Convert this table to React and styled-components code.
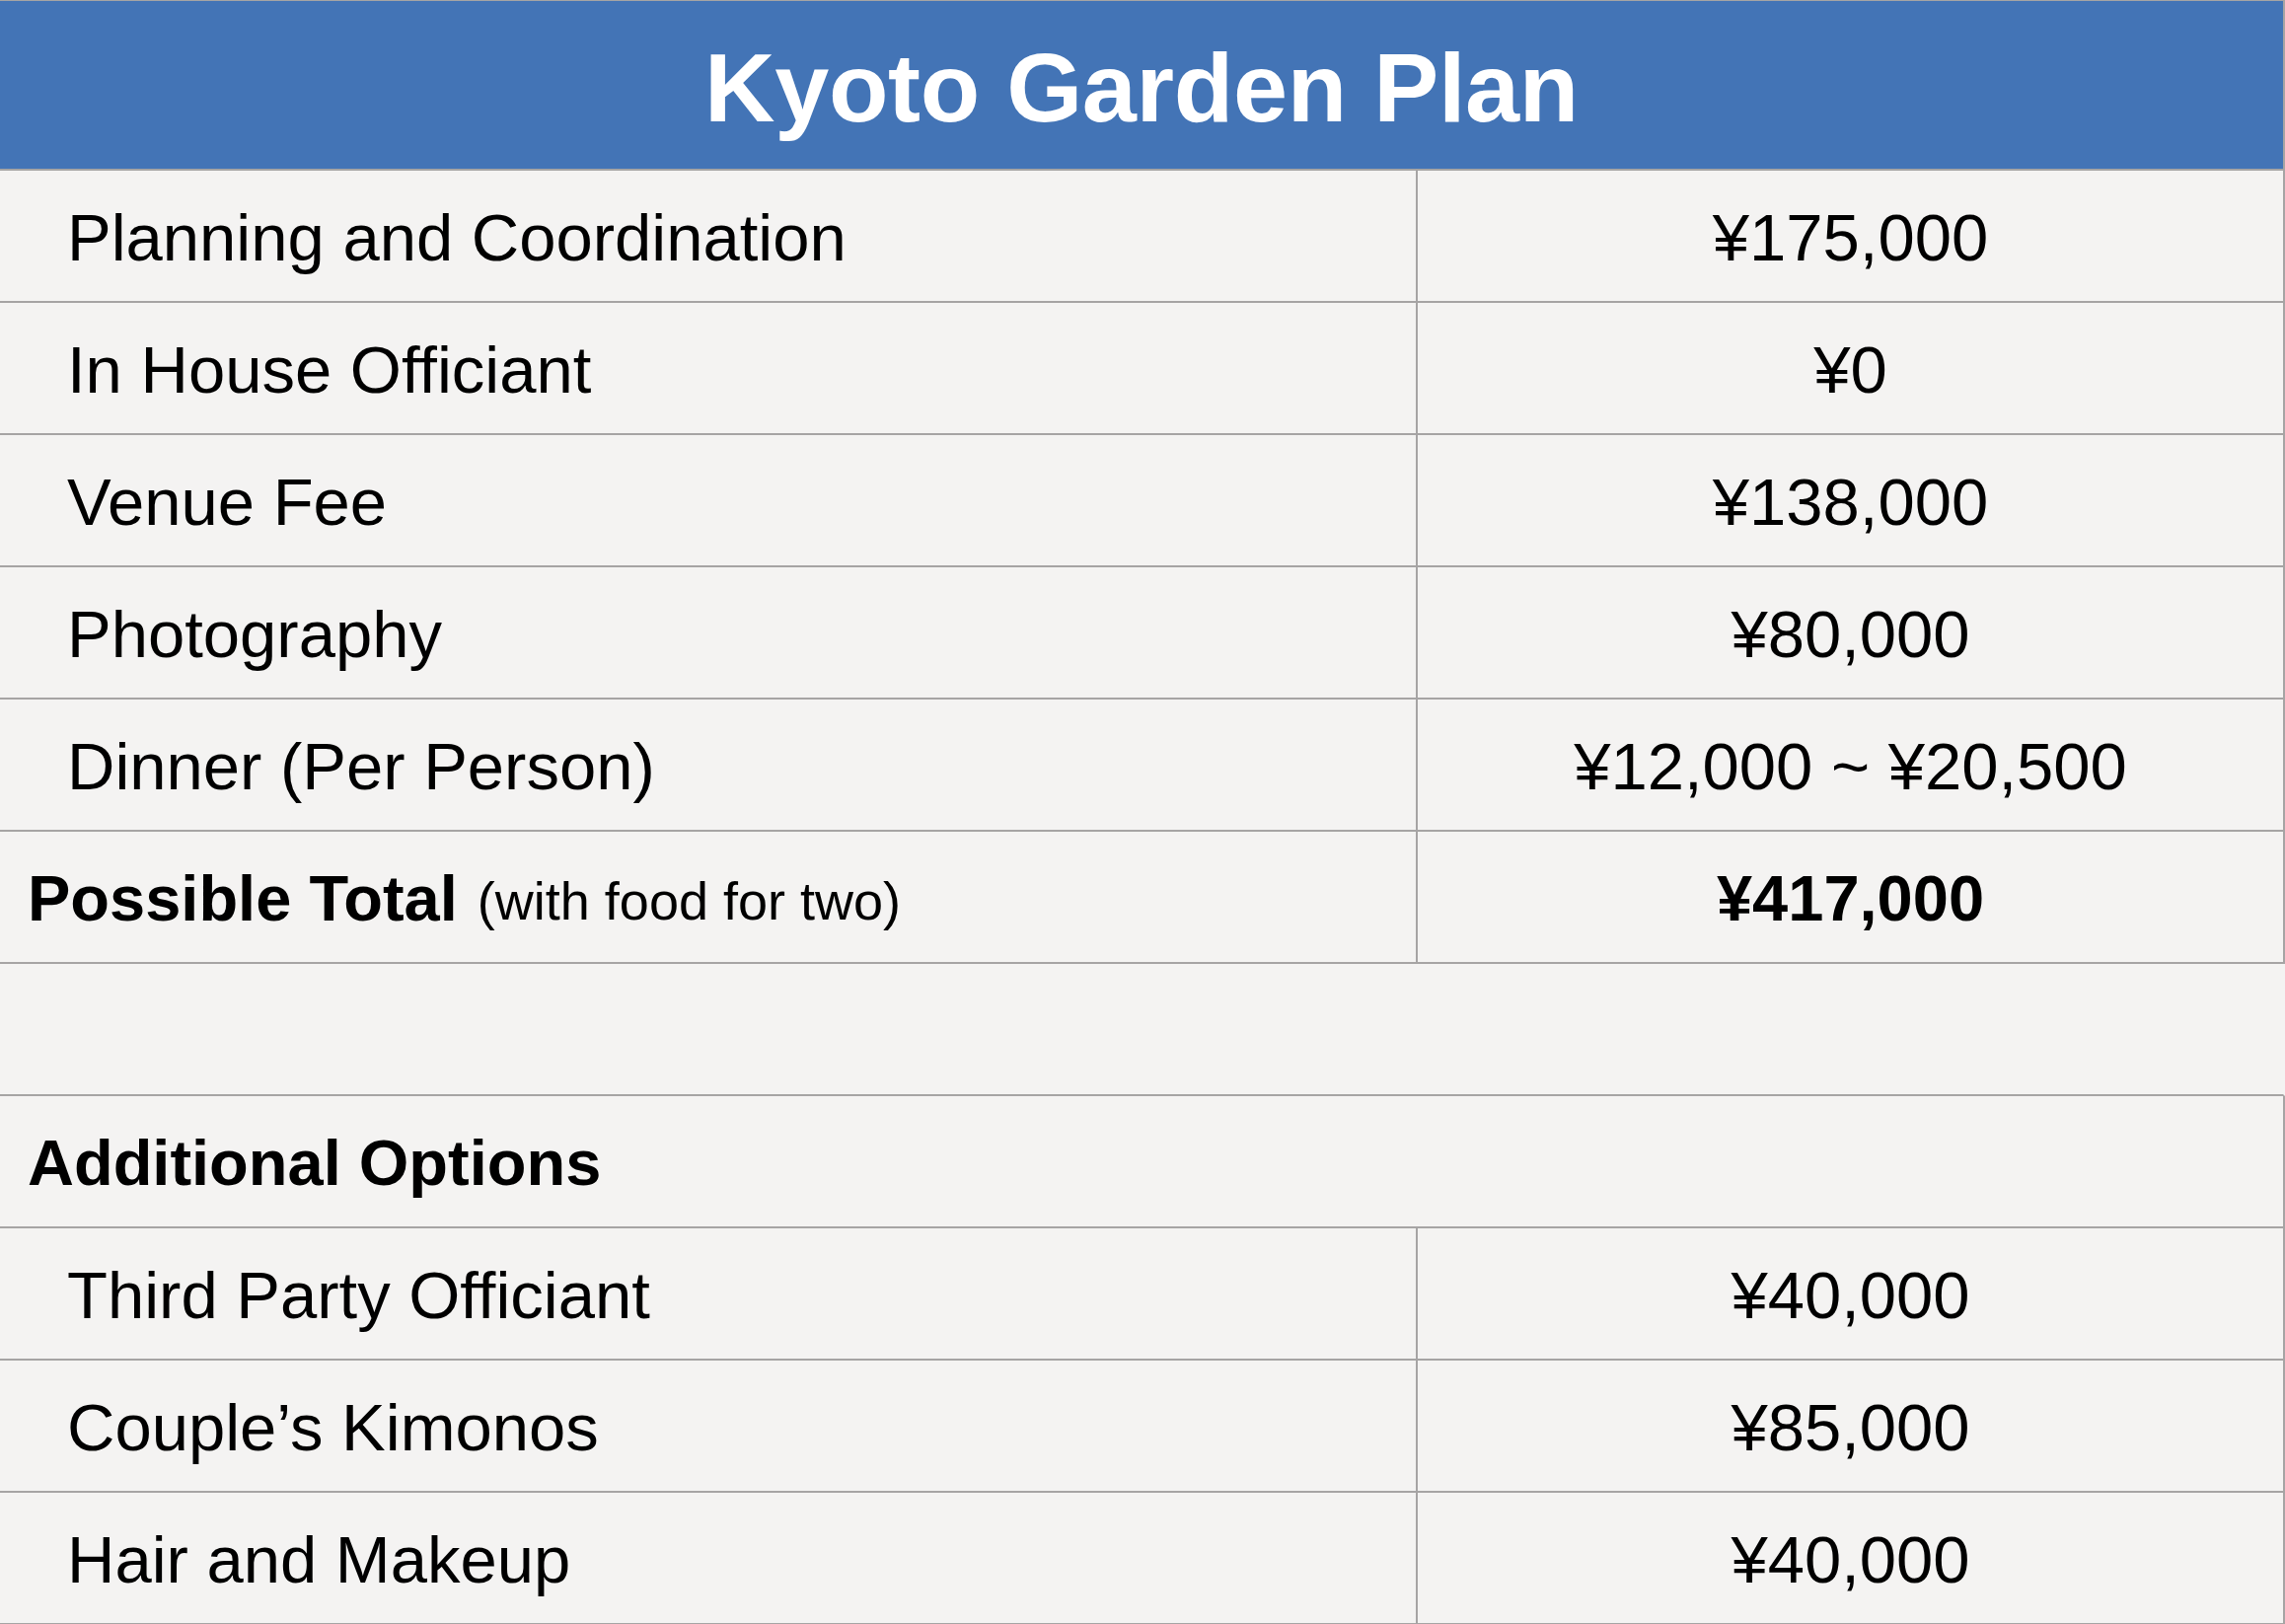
import React from "react";
import styled, { createGlobalStyle } from "styled-components";

const Global = createGlobalStyle`
  html, body {
    margin: 0;
    padding: 0;
    background: #f4f3f2;
  }
  body {
    font-family: "Liberation Sans", Arial, Helvetica, sans-serif;
    color: #000;
  }
`;

const Sheet = styled.div`
  width: 2316px;
  display: flex;
  flex-direction: column;
  background: #f4f3f2;
  border-top: 1px solid #a6a4a4;
  box-sizing: border-box;
`;

const TitleBar = styled.header`
  height: 172px;
  box-sizing: border-box;
  padding-top: 5px;
  display: flex;
  align-items: center;
  justify-content: center;
  background: #4374b6;
  border-bottom: 2px solid #a6a4a4;
  border-right: 2px solid #a6a4a4;
`;

const Title = styled.h1`
  margin: 0;
  font-size: 99px;
  font-weight: 700;
  line-height: 1;
  color: #ffffff;
  letter-spacing: -0.3px;
`;

const Row = styled.div`
  height: 132px;
  display: grid;
  grid-template-columns: ${(p) => (p.$full ? "1fr" : "1437px 1fr")};
  border-bottom: 2px solid #a6a4a4;
  border-right: 2px solid ${(p) => (p.$open ? "transparent" : "#a6a4a4")};
`;

const LabelCell = styled.div`
  display: flex;
  align-items: center;
  padding: 3px 0 0 ${(p) => (p.$bold ? "28px" : "68px")};
  border-right: ${(p) => (p.$full ? "none" : "2px solid #a6a4a4")};
  font-size: ${(p) => (p.$bold ? "65px" : "67px")};
  font-weight: ${(p) => (p.$bold ? 700 : 400)};
  line-height: 1;
  white-space: nowrap;
`;

const Note = styled.span`
  font-size: 54px;
  font-weight: 400;
  margin-left: 20px;
  padding-top: 4px;
`;

const ValueCell = styled.div`
  display: flex;
  align-items: center;
  justify-content: center;
  padding-top: 2px;
  font-size: ${(p) => (p.$bold ? "65px" : "67px")};
  font-weight: ${(p) => (p.$bold ? 700 : 400)};
  line-height: 1;
  white-space: nowrap;
`;

const items = [
  { label: "Planning and Coordination", value: "¥175,000" },
  { label: "In House Officiant", value: "¥0" },
  { label: "Venue Fee", value: "¥138,000" },
  { label: "Photography", value: "¥80,000" },
  { label: "Dinner (Per Person)", value: "¥12,000 ~ ¥20,500" },
];

const options = [
  { label: "Third Party Officiant", value: "¥40,000" },
  { label: "Couple\u2019s Kimonos", value: "¥85,000" },
  { label: "Hair and Makeup", value: "¥40,000" },
];

export default function App() {
  return (
    <>
      <Global />
      <Sheet>
        <TitleBar>
          <Title>Kyoto Garden Plan</Title>
        </TitleBar>
        {items.map((it) => (
          <Row key={it.label}>
            <LabelCell>{it.label}</LabelCell>
            <ValueCell>{it.value}</ValueCell>
          </Row>
        ))}
        <Row>
          <LabelCell $bold>
            Possible Total<Note>(with food for two)</Note>
          </LabelCell>
          <ValueCell $bold>¥417,000</ValueCell>
        </Row>
        <Row $full $open />
        <Row $full>
          <LabelCell $bold $full>
            Additional Options
          </LabelCell>
        </Row>
        {options.map((it) => (
          <Row key={it.label}>
            <LabelCell>{it.label}</LabelCell>
            <ValueCell>{it.value}</ValueCell>
          </Row>
        ))}
      </Sheet>
    </>
  );
}
